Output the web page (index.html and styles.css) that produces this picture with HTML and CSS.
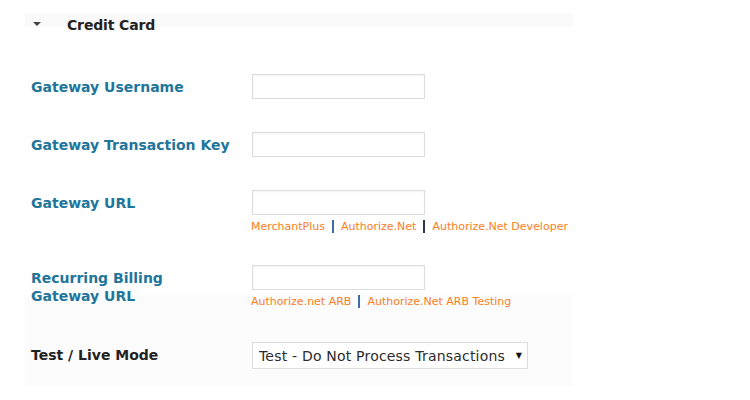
FILE: index.html
```html
<!DOCTYPE html>
<html>
<head>
<meta charset="utf-8">
<link rel="stylesheet" href="styles.css">
</head>
<body>
<div class="panel">
  <div class="header">
    <span class="toggle"></span>
    <span class="title">Credit Card</span>
  </div>
  <div class="fields">
    <div class="row">
      <label class="label">Gateway Username</label>
      <div class="control"><input class="text" type="text"></div>
    </div>
    <div class="row">
      <label class="label">Gateway Transaction Key</label>
      <div class="control"><input class="text" type="text"></div>
    </div>
    <div class="row">
      <label class="label">Gateway URL</label>
      <div class="control">
        <input class="text" type="text">
        <div class="links"><a>MerchantPlus</a><span class="sep sep-a"></span><a>Authorize.Net</a><span class="sep"></span><a>Authorize.Net Developer</a></div>
      </div>
    </div>
    <div class="row">
      <label class="label">Recurring Billing<br>Gateway URL</label>
      <div class="control">
        <input class="text" type="text">
        <div class="links"><a>Authorize.net ARB</a><span class="sep sep-a"></span><a>Authorize.Net ARB Testing</a></div>
      </div>
    </div>
    <div class="row row-last">
      <label class="label label-dark">Test / Live Mode</label>
      <div class="control">
        <span class="select-wrap"><select class="select"><option>Test - Do Not Process Transactions</option><option>Live - Process Transactions</option></select></span>
      </div>
    </div>
  </div>
</div>
</body>
</html>
```

FILE: styles.css
```css
html, body {
  margin: 0;
  padding: 0;
  background: #fff;
  font-family: "DejaVu Sans", Verdana, sans-serif;
}

.panel {
  margin-left: 25px;
  width: 548px;
}

.header {
  margin-top: 13px;
  height: 14px;
  background: #fafafa;
  display: flex;
  align-items: flex-start;
}

.toggle {
  margin-left: 8px;
  margin-top: 9px;
  width: 0;
  height: 0;
  border-left: 4px solid transparent;
  border-right: 4px solid transparent;
  border-top: 4px solid #444;
}

.title {
  margin-left: 26px;
  margin-top: 4px;
  font-size: 14px;
  line-height: 17px;
  font-weight: bold;
  color: #222;
  letter-spacing: -0.15px;
}

.fields {
  margin-top: 30px;
}

.row {
  display: flex;
  align-items: flex-start;
  padding: 17px 0 16px 6px;
}

.label {
  width: 221px;
  flex: none;
  padding-top: 4px;
  font-size: 14px;
  line-height: 18px;
  font-weight: bold;
  color: #21759b;
}

.label-dark {
  color: #222;
}

.control {
  display: flex;
  flex-direction: column;
}

.text {
  box-sizing: border-box;
  width: 173px;
  height: 25px;
  margin: 0;
  border: 1px solid #dcdcdc;
  box-shadow: inset 0 1px 2px rgba(0, 0, 0, 0.05);
  background: #fff;
}

.links {
  margin-top: 4px;
  margin-bottom: -2px;
  margin-left: -1px;
  font-size: 11px;
  line-height: 15px;
  white-space: nowrap;
}

.links a {
  color: #f9801d;
}

.sep {
  display: inline-block;
  width: 2px;
  height: 13px;
  margin: 0 7px 0 7px;
  vertical-align: -3px;
  background: #2c3552;
}

.sep-a {
  background: #3d6da8;
}

.row-last {
  margin-top: -28px;
  padding-top: 47px;
  padding-bottom: 17px;
  background: #fcfcfc;
}

.select-wrap {
  position: relative;
  display: inline-block;
}

.select-wrap::after {
  content: "\25BC";
  position: absolute;
  right: 6px;
  top: 9px;
  font-size: 8px;
  color: #111;
  pointer-events: none;
}

.select {
  -webkit-appearance: none;
  appearance: none;
  box-sizing: border-box;
  width: 276px;
  height: 27px;
  margin: 0;
  padding: 0 0 0 6px;
  border: 1px solid #dcdcdc;
  border-radius: 0;
  background: #fff;
  font-family: "DejaVu Sans", Verdana, sans-serif;
  font-size: 14px;
  letter-spacing: 0.2px;
  color: #2b2b2b;
}
```
